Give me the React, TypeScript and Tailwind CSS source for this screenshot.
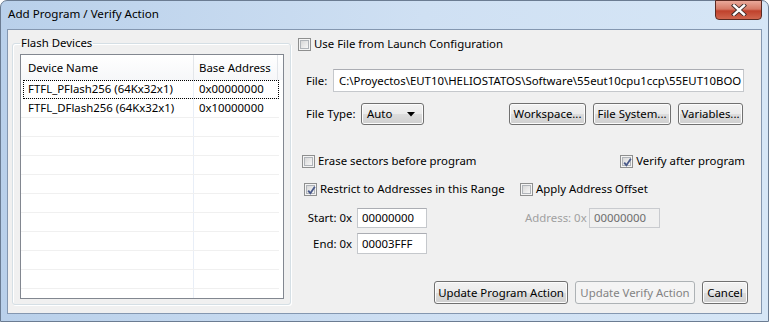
import React from "react";

const btnBase =
  "border border-[#707070] rounded-[3px] bg-[linear-gradient(to_bottom,#f2f2f2_0%,#ebebeb_50%,#dddddd_51%,#cfcfcf_100%)] shadow-[inset_0_0_0_1px_#fcfcfc] text-black flex items-center leading-none whitespace-nowrap";
const btnCls = `${btnBase} justify-center`;

function Check({ checked }: { checked?: boolean }) {
  return (
    <div className="w-[13px] h-[13px] border border-[#8e8f8f] bg-[#f4f4f4] p-[1px] shrink-0">
      <div className="relative w-full h-full border border-[#b0b4b9] bg-[linear-gradient(135deg,#d8d8d8,#f7f7f7)]">
        {checked && (
          <svg className="absolute -left-[2px] -top-[2px]" width="13" height="13" viewBox="0 0 13 13">
            <path d="M3.2 6.6 L5.4 9.2 L9.8 2.8" fill="none" stroke="#4a5a8a" strokeWidth="1.8" />
          </svg>
        )}
      </div>
    </div>
  );
}

export default function App() {
  const rows = Array.from({ length: 12 });
  return (
    <div className="w-[769px] h-[322px] font-['Noto_Sans',sans-serif] text-[11.4px] text-black overflow-hidden">
      <div className="w-full h-full flex flex-col border border-[#6b7c92] rounded-t-[7px] bg-[linear-gradient(to_right,#b9d0ea,#cfe0f3_55%,#d6e6f6)]">
        {/* Title bar */}
        <div className="h-[28px] flex items-start shrink-0">
          <div className="pl-[7px] pt-[4px] text-[11.6px] text-black leading-[18px]">Add Program / Verify Action</div>
          <div className="ml-auto mr-[6px] -mt-[1px] w-[47px] h-[20px] rounded-b-[4px] border border-[#5b2a22] bg-[linear-gradient(to_bottom,#e9a99a_0%,#d57a66_45%,#c0412c_55%,#d0664e_100%)] flex items-center justify-center">
            <svg width="16" height="12" viewBox="0 0 16 12">
              <path d="M3 1.5 L13 10.5 M13 1.5 L3 10.5" stroke="#3b2a28" strokeWidth="4.2" strokeLinecap="square" />
              <path d="M3 1.5 L13 10.5 M13 1.5 L3 10.5" stroke="#ffffff" strokeWidth="2.4" strokeLinecap="square" />
            </svg>
          </div>
        </div>
        {/* Client */}
        <div className="mx-[6px] h-[285px] border border-[#8497b0] bg-[#f0f0f0] flex shrink-0">
          {/* Left group */}
          <fieldset className="ml-[4px] mt-[5px] w-[279px] h-[270px] border border-[#d5dfe5] rounded-[3px] shadow-[inset_1px_1px_0_#ffffff,1px_1px_0_#ffffff] px-[7px] pb-[4px] min-w-0">
            <legend className="px-[1px] leading-[16px]">Flash Devices</legend>
            <div className="mt-[3px] w-[264px] h-[245px] border border-[#828790] bg-white overflow-hidden flex flex-col">
              <div className="h-[25px] shrink-0 flex bg-[linear-gradient(to_bottom,#ffffff,#f6f7f9)]">
                <div className="w-[173px] pl-[7px] flex items-center border-r border-[#e3e6ea]">Device Name</div>
                <div className="w-[84px] pl-[5px] flex items-center border-r border-[#e3e6ea]">Base Address</div>
              </div>
              {rows.map((_, i) => (
                <div
                  key={i}
                  className={`h-[19px] shrink-0 flex border-b border-[#f0f0f0] ${i === 0 ? "outline-1 outline-dotted outline-black -outline-offset-1 ml-[2px] w-[256px]" : "w-[258px]"}`}
                >
                  <div className={`${i === 0 ? "w-[171px] pl-[5px]" : "w-[173px] pl-[7px]"} flex items-center border-r border-[#e8eef7] whitespace-nowrap`}>
                    {i === 0 ? "FTFL_PFlash256 (64Kx32x1)" : i === 1 ? "FTFL_DFlash256 (64Kx32x1)" : ""}
                  </div>
                  <div className="w-[84px] pl-[5px] flex items-center">
                    {i === 0 ? "0x00000000" : i === 1 ? "0x10000000" : ""}
                  </div>
                </div>
              ))}
            </div>
          </fieldset>

          {/* Right panel */}
          <div className="ml-[5px] w-[452px] flex flex-col">
            <div className="mt-[6px] h-[16px] pl-[2px] flex items-center gap-[3px]">
              <Check />
              <span>Use File from Launch Configuration</span>
            </div>

            <div className="mt-[17px] h-[23px] flex items-center">
              <span className="pl-[10px] w-[37px] whitespace-nowrap">File:</span>
              <div className="w-[411px] h-[23px] border border-[#c5c8cc] border-t-[#abadb3] bg-white flex items-center pl-[5px] whitespace-nowrap overflow-hidden">
                C:\Proyectos\EUT10\HELIOSTATOS\Software\55eut10cpu1ccp\55EUT10BOO
              </div>
            </div>

            <div className="mt-[11px] h-[22px] flex items-center">
              <span className="pl-[10px] w-[65px] whitespace-nowrap">File Type:</span>
              <div className={`${btnBase} h-[22px] w-[63px] justify-between pl-[5px] pr-[8px]`}>
                <span>Auto</span>
                <svg width="8" height="5" viewBox="0 0 8 5">
                  <path d="M0 0 H8 L4 4.5 Z" fill="#000" />
                </svg>
              </div>
              <div className="ml-auto mr-[5px] flex gap-[7px]">
                <div className={`${btnCls} h-[22px] w-[77px]`}>Workspace...</div>
                <div className={`${btnCls} h-[22px] w-[78px]`}>File System...</div>
                <div className={`${btnCls} h-[22px] w-[65px]`}>Variables...</div>
              </div>
            </div>

            <div className="mt-[28px] h-[16px] flex items-center">
              <div className="pl-[6px] flex items-center gap-[3px]">
                <Check />
                <span>Erase sectors before program</span>
              </div>
              <div className="ml-auto mr-[3px] flex items-center gap-[3px]">
                <Check checked />
                <span>Verify after program</span>
              </div>
            </div>

            <div className="mt-[12px] h-[16px] flex items-center">
              <div className="pl-[8px] w-[224px] flex items-center gap-[3px]">
                <Check checked />
                <span className="whitespace-nowrap">Restrict to Addresses in this Range</span>
              </div>
              <div className="flex items-center gap-[3px]">
                <Check />
                <span>Apply Address Offset</span>
              </div>
            </div>

            <div className="mt-[11px] h-[20px] flex items-center">
              <span className="w-[56px] text-right whitespace-nowrap">Start: 0x</span>
              <div className="ml-[5px] w-[70px] h-[20px] border border-[#c5c8cc] border-t-[#abadb3] bg-white flex items-center pl-[4px]">00000000</div>
              <span className="ml-[98px] w-[60px] text-right text-[#a0a0a0] whitespace-nowrap">Address: 0x</span>
              <div className="ml-[4px] w-[71px] h-[20px] border border-[#c9cbcf] bg-[#f0f0f0] text-[#6d6d6d] flex items-center pl-[4px]">00000000</div>
            </div>

            <div className="mt-[5px] h-[21px] flex items-center">
              <span className="w-[56px] text-right whitespace-nowrap">End: 0x</span>
              <div className="ml-[5px] w-[70px] h-[21px] border border-[#c5c8cc] border-t-[#abadb3] bg-white flex items-center pl-[4px]">00003FFF</div>
            </div>

            <div className="mt-[27px] flex justify-end gap-[7px]">
              <div className={`${btnCls} h-[23px] w-[134px]`}>Update Program Action</div>
              <div className="h-[23px] w-[120px] border border-[#adb2b5] rounded-[3px] bg-[#f4f4f4] text-[#838383] flex items-center justify-center whitespace-nowrap">
                Update Verify Action
              </div>
              <div className={`${btnCls} h-[23px] w-[46px]`}>Cancel</div>
            </div>
          </div>
        </div>
      </div>
    </div>
  );
}
